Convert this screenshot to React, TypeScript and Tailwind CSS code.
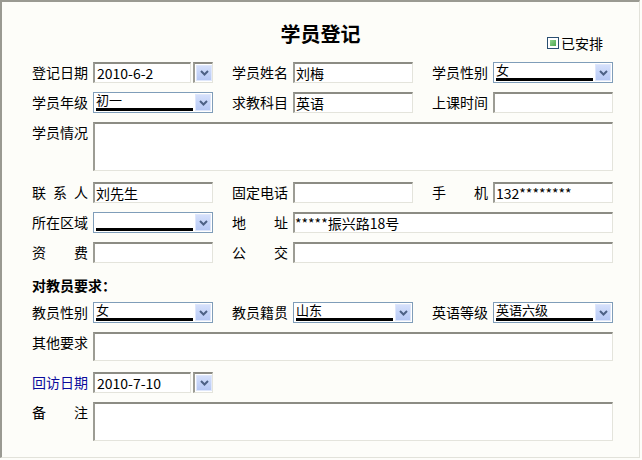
import React from "react";

// sunken classic-windows text box
const sunken =
  "border-t-2 border-l-2 border-r border-b border-t-[#8c8c84] border-l-[#9c9c94] border-r-[#e4e4dc] border-b-[#e4e4dc] bg-white";

function Chevron() {
  return (
    <svg width="9" height="6" viewBox="0 0 9 6">
      <path d="M1 1 L4.5 4.5 L8 1" fill="none" stroke="#4d6185" strokeWidth="2" />
    </svg>
  );
}

function DropButton() {
  return (
    <div className="w-[16px] h-full flex items-center justify-center border border-[#dfe7fb] bg-linear-to-b from-[#d5e0fb] to-[#b6c8f4]">
      <Chevron />
    </div>
  );
}

function Label({ text, spread, blue }: { text: string; spread?: boolean; blue?: boolean }) {
  const color = blue ? "text-[#0a0a9c]" : "text-black";
  if (spread) {
    return (
      <div className={`w-[56px] h-[21px] leading-[21px] shrink-0 flex justify-between ${color}`}>
        {text.split("").map((c, i) => (
          <span key={i}>{c}</span>
        ))}
      </div>
    );
  }
  return <div className={`w-[56px] h-[21px] leading-[21px] shrink-0 whitespace-nowrap ${color}`}>{text}</div>;
}

function TextBox({ value = "" }: { value?: string }) {
  return (
    <div className={`w-[120px] h-[21px] ${sunken} pl-[1px] leading-[18px] whitespace-nowrap overflow-hidden`}>
      {value}
    </div>
  );
}

function Combo({ value = "" }: { value?: string }) {
  return (
    <div className="w-[120px] h-[21px] border border-[#7f9db9] bg-white flex p-[1px]">
      <div className="flex-1 ml-[1px] mr-[2px] flex flex-col">
        <div className="h-[14px] text-[13px] leading-[11px] whitespace-nowrap">{value}</div>
        <div className="h-[3px] bg-black" />
      </div>
      <DropButton />
    </div>
  );
}

function DateBox({ value }: { value: string }) {
  return (
    <div className="w-[120px] h-[21px] flex gap-[2px]">
      <div className={`w-[98px] h-full ${sunken} pl-[2px] leading-[18px] whitespace-nowrap`}>{value}</div>
      <div className={`w-[20px] h-full ${sunken} p-[1px]`}>
        <DropButton />
      </div>
    </div>
  );
}

function Field({ label, spread, blue, children }: { label: string; spread?: boolean; blue?: boolean; children: React.ReactNode }) {
  return (
    <div className="w-[200px] shrink-0 flex items-center gap-[5px]">
      <Label text={label} spread={spread} blue={blue} />
      {children}
    </div>
  );
}

function AreaRow({ label, spread, h, className }: { label: string; spread?: boolean; h: string; className: string }) {
  return (
    <div className={`flex items-start gap-[5px] ${className}`}>
      <Label text={label} spread={spread} />
      <div className={`w-[520px] ${h} ${sunken}`} />
    </div>
  );
}

export default function App() {
  return (
    <div className="w-[642px] h-[460px] bg-[#fdfdf9] font-['Noto_Sans_CJK_SC',sans-serif] text-[14px] text-black">
      <div className="w-[640px] h-[458px] border-t-2 border-l-2 border-r border-b border-t-[#9a9a92] border-l-[#9a9a92] border-r-[#e2e2da] border-b-[#e2e2da] pt-[20px]">
        {/* title */}
        <div className="grid grid-cols-[1fr_auto_1fr] items-start">
          <div />
          <div className="text-[20px] font-bold leading-[24px]">学员登记</div>
          <div className="flex justify-end pt-[12px] pr-[36px]">
            <div className="flex items-center gap-[2px] h-[18px]">
              <div className="w-[12px] h-[12px] border border-[#2a4f72] bg-white p-[2px]">
                <div className="w-full h-full bg-linear-to-br from-[#8fd48f] to-[#4ea84e]" />
              </div>
              <span className="leading-[18px]">已安排</span>
            </div>
          </div>
        </div>

        <div className="pl-[30px] flex flex-col">
          <div className="flex mt-[10px]">
            <Field label="登记日期">
              <DateBox value="2010-6-2" />
            </Field>
            <Field label="学员姓名">
              <TextBox value="刘梅" />
            </Field>
            <Field label="学员性别">
              <Combo value="女" />
            </Field>
          </div>

          <div className="flex mt-[9px]">
            <Field label="学员年级">
              <Combo value="初一" />
            </Field>
            <Field label="求教科目">
              <TextBox value="英语" />
            </Field>
            <Field label="上课时间">
              <TextBox />
            </Field>
          </div>

          <AreaRow label="学员情况" h="h-[49px]" className="mt-[9px]" />

          <div className="flex mt-[11px]">
            <Field label="联系人" spread>
              <TextBox value="刘先生" />
            </Field>
            <Field label="固定电话">
              <TextBox />
            </Field>
            <Field label="手机" spread>
              <TextBox value="132********" />
            </Field>
          </div>

          <div className="flex mt-[9px]">
            <Field label="所在区域">
              <Combo />
            </Field>
            <div className="flex items-center gap-[5px]">
              <Label text="地址" spread />
              <div className={`w-[320px] h-[21px] ${sunken} leading-[18px] whitespace-nowrap`}>*****振兴路18号</div>
            </div>
          </div>

          <div className="flex mt-[9px]">
            <Field label="资费" spread>
              <TextBox />
            </Field>
            <div className="flex items-center gap-[5px]">
              <Label text="公交" spread />
              <div className={`w-[320px] h-[21px] ${sunken}`} />
            </div>
          </div>

          <div className="mt-[13px] h-[18px] leading-[18px] font-bold">对教员要求：</div>

          <div className="flex mt-[8px]">
            <Field label="教员性别">
              <Combo value="女" />
            </Field>
            <Field label="教员籍贯">
              <Combo value="山东" />
            </Field>
            <Field label="英语等级">
              <Combo value="英语六级" />
            </Field>
          </div>

          <AreaRow label="其他要求" h="h-[29px]" className="mt-[9px]" />

          <div className="flex mt-[11px]">
            <Field label="回访日期" blue>
              <DateBox value="2010-7-10" />
            </Field>
          </div>

          <AreaRow label="备注" spread h="h-[39px]" className="mt-[9px]" />
        </div>
      </div>
    </div>
  );
}
